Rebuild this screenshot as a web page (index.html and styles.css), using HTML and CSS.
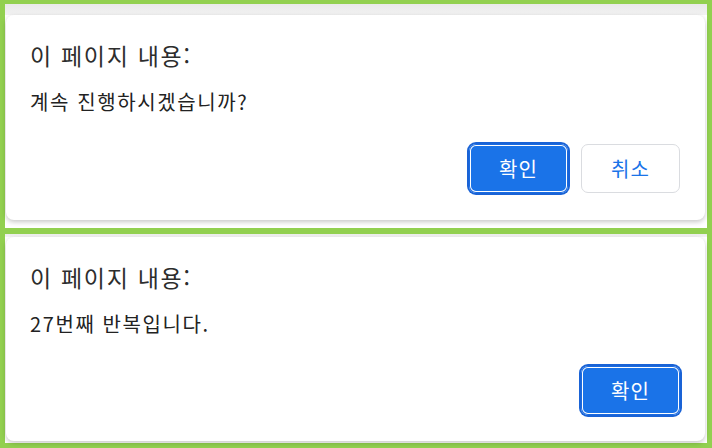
FILE: index.html
```html
<!DOCTYPE html>
<html lang="ko">
<head>
<meta charset="utf-8">
<title>대화 상자</title>
<link rel="stylesheet" href="styles.css">
</head>
<body>
  <section class="panel panel-first">
    <div class="dialog">
      <h1 class="title">이 페이지 내용:</h1>
      <p class="message">계속 진행하시겠습니까?</p>
      <div class="actions">
        <button class="btn btn-primary" type="button">확인</button>
        <button class="btn btn-secondary" type="button">취소</button>
      </div>
    </div>
  </section>
  <section class="panel panel-second">
    <div class="dialog dialog-second">
      <h1 class="title">이 페이지 내용:</h1>
      <p class="message">27번째 반복입니다.</p>
      <div class="actions">
        <button class="btn btn-primary" type="button">확인</button>
      </div>
    </div>
  </section>
</body>
</html>
```
FILE: styles.css
```css
html, body {
  margin: 0;
  height: 100%;
}
body {
  box-sizing: border-box;
  background: #92d050;
  padding: 4px 5px 5px 5px;
  display: flex;
  flex-direction: column;
  gap: 6px;
  font-family: "Noto Sans CJK KR", "Noto Sans", sans-serif;
  overflow: hidden;
}
.panel {
  background: #fff;
  padding: 0 2px 0 1px;
}
.panel-first {
  height: 224px;
  box-sizing: border-box;
  padding-top: 11px;
  background: linear-gradient(to bottom, #e9e9e9 0, #f2f2f2 11px, #fff 11px);
}
.panel-second {
  height: 209px;
  box-sizing: border-box;
  padding-top: 3px;
  background: linear-gradient(to bottom, #ececec 0, #f4f4f4 3px, #fff 3px);
}
.dialog {
  background: #fff;
  border-radius: 8px;
  box-shadow: 0 2px 5px rgba(0, 0, 0, 0.22);
  padding: 26px 25px 27px 24px;
}
.dialog-second {
  padding-bottom: 26px;
}
.title {
  margin: 0;
  font-size: 23px;
  line-height: 29px;
  letter-spacing: 1.7px;
  font-weight: 400;
  color: #2d2d2d;
}
.message {
  margin: 20px 0 0;
  font-size: 20px;
  line-height: 24px;
  letter-spacing: 1.6px;
  color: #222;
}
.actions {
  margin-top: 30px;
  display: flex;
  justify-content: flex-end;
  align-items: center;
  gap: 13px;
}
.btn {
  box-sizing: border-box;
  width: 99px;
  height: 49px;
  border-radius: 7px;
  font-family: inherit;
  font-size: 20px;
  letter-spacing: 1px;
  padding: 0;
}
.btn-primary {
  background: #1a73e8;
  color: #fff;
  border: none;
  box-shadow: 0 0 0 2px #1a63d6, inset 0 0 0 1px #1a6be0, inset 0 0 0 2px #ffffff;
}
.btn-secondary {
  background: #fff;
  color: #1a73e8;
  border: 1px solid #dadce0;
}
```
